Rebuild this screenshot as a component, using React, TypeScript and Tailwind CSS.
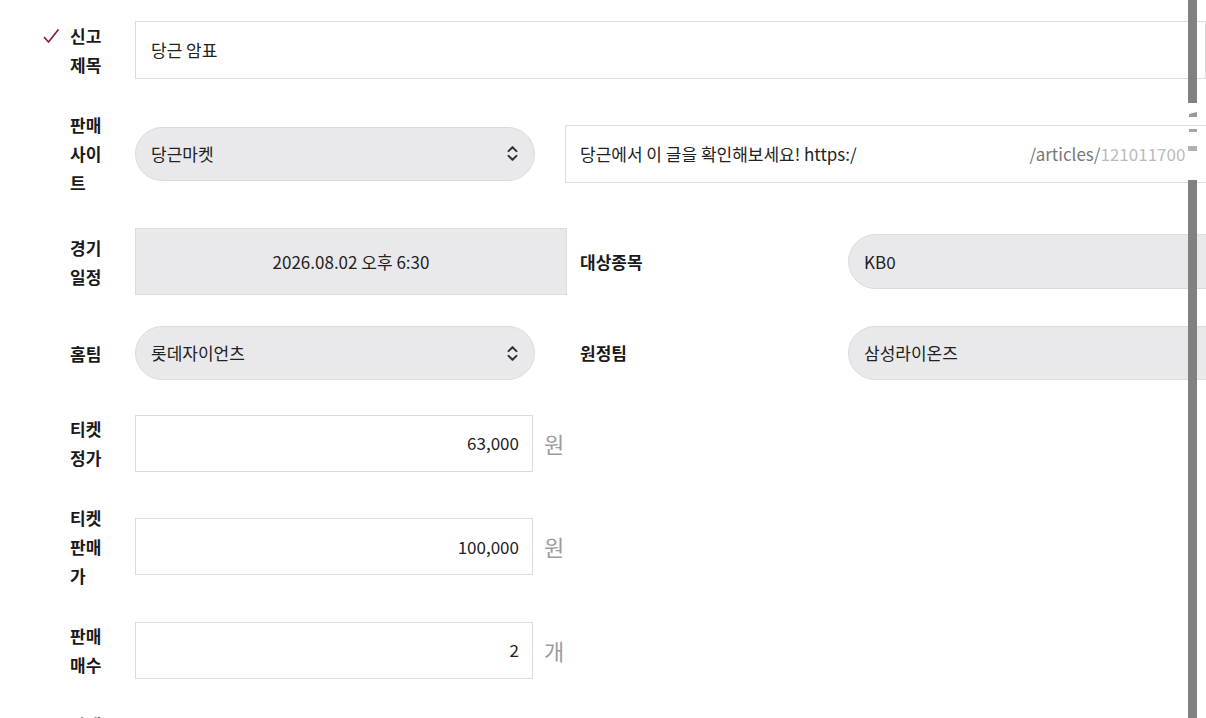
import { ChevronsUpDown } from 'lucide-react';

function Check() {
  return (
    <svg width="18" height="16" viewBox="0 0 18 16" className="text-[#8e1b3b]">
      <path d="M2.5 9.5 L6.5 14 L16 2" fill="none" stroke="currentColor" strokeWidth="1.7" strokeLinecap="round" strokeLinejoin="round" />
    </svg>
  );
}

function Label({ text, required }: { text: string; required?: boolean }) {
  return (
    <div className="flex items-start">
      <div className="w-[28px] h-[29px] flex items-center">{required && <Check />}</div>
      <div className="w-[36px] text-[17px] font-bold leading-[29px] text-[#1a1a1a]">{text}</div>
    </div>
  );
}

function SelectBox({ value }: { value: string }) {
  return (
    <div className="w-[400px] h-[54px] rounded-full bg-[#e9e9eb] border border-[#dcdcde] pl-[15px] pr-[12px] flex items-center justify-between text-[17px]">
      <span>{value}</span>
      <ChevronsUpDown size={19} strokeWidth={2.6} className="text-[#333]" />
    </div>
  );
}

function NumberInput({ value, unit }: { value: string; unit: string }) {
  return (
    <div className="flex items-center">
      <div className="w-[398px] h-[57px] border border-[#dcdcdc] bg-white flex items-center justify-end pr-[13px] text-[17px]">
        {value}
      </div>
      <span className="ml-[11px] text-[22px] text-[#9c9c9c]">{unit}</span>
    </div>
  );
}

export default function App() {
  return (
    <div className="relative w-[1206px] h-[718px] overflow-hidden bg-white text-[#222] font-['Noto_Sans_CJK_KR','Noto_Sans',sans-serif]">
      <div className="flex flex-col gap-[31px] pt-[21px] pl-[42px]">
        {/* 신고 제목 */}
        <div className="flex items-center">
          <Label text="신고 제목" required />
          <div className="ml-[29px] w-[1100px] h-[58px] border border-[#dcdcdc] bg-white flex items-center px-[15px] text-[17px]">
            당근 암표
          </div>
        </div>

        {/* 판매 사이트 */}
        <div className="flex items-center">
          <Label text="판매사이트" />
          <div className="ml-[29px] flex items-center">
            <SelectBox value="당근마켓" />
            <div className="ml-[30px] w-[700px] h-[58px] border border-[#dcdcdc] bg-white flex items-center px-[14px] text-[17px] whitespace-nowrap overflow-hidden">
              <span>당근에서 이 글을 확인해보세요! https:/</span>
              <span className="text-transparent">/www.daangn.com/kr</span>
              <span className="text-[#777]">/articles/</span>
              <span className="text-[#bbb]">121011700</span>
            </div>
          </div>
        </div>

        {/* 경기 일정 */}
        <div className="flex items-center">
          <Label text="경기 일정" />
          <div className="ml-[29px] flex items-center">
            <div className="w-[432px] h-[67px] bg-[#e9e9eb] border border-[#dcdcde] flex items-center justify-center text-[17px]">
              2026.08.02 오후 6:30
            </div>
            <div className="ml-[13px] w-[268px] text-[17px] font-bold text-[#1a1a1a]">대상종목</div>
            <div className="w-[420px] h-[55px] rounded-l-full bg-[#e9e9eb] border border-[#dcdcde] flex items-center pl-[15px] text-[17px]">
              KB0
            </div>
          </div>
        </div>

        {/* 홈팀 / 원정팀 */}
        <div className="flex items-center">
          <Label text="홈팀" />
          <div className="ml-[29px] flex items-center">
            <SelectBox value="롯데자이언츠" />
            <div className="ml-[45px] w-[268px] text-[17px] font-bold text-[#1a1a1a]">원정팀</div>
            <div className="w-[420px] h-[54px] rounded-l-full bg-[#e9e9eb] border border-[#dcdcde] flex items-center pl-[15px] text-[17px]">
              삼성라이온즈
            </div>
          </div>
        </div>

        {/* 티켓 정가 */}
        <div className="flex items-center mt-[3px]">
          <Label text="티켓 정가" />
          <div className="ml-[29px]">
            <NumberInput value="63,000" unit="원" />
          </div>
        </div>

        {/* 티켓 판매가 */}
        <div className="flex items-center">
          <Label text="티켓 판매가" />
          <div className="ml-[29px]">
            <NumberInput value="100,000" unit="원" />
          </div>
        </div>

        {/* 판매 매수 */}
        <div className="flex items-center">
          <Label text="판매 매수" />
          <div className="ml-[29px]">
            <NumberInput value="2" unit="개" />
          </div>
        </div>

        {/* 판매 방식 (cut off by the window) */}
        <div className="flex items-center">
          <Label text="판매 방식" />
        </div>
      </div>

      {/* scrollbar */}
      <div className="absolute left-[1188px] top-0 w-[9px] h-[103px] bg-[#818181]" />
      <div className="absolute left-[1189px] top-[112px] w-[8px] h-[5px] bg-[#9a9a9a] [clip-path:polygon(0_40%,100%_0,100%_100%,0_100%)]" />
      <div className="absolute left-[1189px] top-[129px] w-[8px] h-[3px] bg-[#a5a5a5]" />
      <div className="absolute left-[1188px] top-[146px] w-[9px] h-[5px] bg-[#b0b0b0]" />
      <div className="absolute left-[1188px] top-[180px] w-[9px] bottom-0 bg-[#818181]" />
    </div>
  );
}
